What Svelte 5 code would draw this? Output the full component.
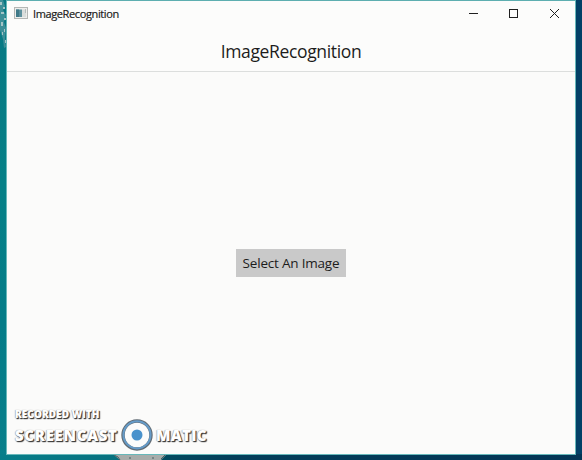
<script>
  const title = 'ImageRecognition';
</script>

<div class="desktop">
  <svg class="wallpaper" width="582" height="460" aria-hidden="true">
    <defs>
      <linearGradient id="teal" x1="0" y1="0" x2="0" y2="1">
        <stop offset="0" stop-color="#087883" />
        <stop offset="0.4" stop-color="#058087" />
        <stop offset="0.7" stop-color="#047c88" />
        <stop offset="1" stop-color="#087f8b" />
      </linearGradient>
      <linearGradient id="floor" x1="0" y1="0" x2="1" y2="0">
        <stop offset="0" stop-color="#077e8a" />
        <stop offset="0.2" stop-color="#07717f" />
        <stop offset="0.285" stop-color="#034b60" />
        <stop offset="0.4" stop-color="#033e5a" />
        <stop offset="1" stop-color="#033555" />
      </linearGradient>
    </defs>
    <rect width="582" height="460" fill="#024066" />
    <rect width="7" height="460" fill="url(#teal)" />
    <rect y="454" width="582" height="6" fill="url(#floor)" />
    <path d="M0 0H3L5 6L3 10L6 15L4 22L6 28L5 38L6 47L4 48L3 39L0 30Z" fill="#3d8f98" />
    <path d="M0 2h2v3H0zM3 7h2v2H3zM1 12h3v2H1zM4 18h2v2H4zM1 22h2v4H1zM4 29h1v3H4zM2 32h1v3H2zM5 40h1v3H5z" fill="#a5c5c7" />
    <path d="M114 455H166L161 460H120Z" fill="#a7acaa" />
    <path d="M114 455l4 2 2 3M129 458h2M152 458h2M165 455l-4 4" stroke="#465f62" fill="none" />
  </svg>

  <main class="window">
    <header class="titlebar">
      <svg class="appicon" width="14" height="12" viewBox="0 0 14 12" aria-hidden="true">
        <rect x=".5" y=".5" width="13" height="11" fill="#eeeeec" stroke="#b4b7b5" />
        <rect x="2" y="2.5" width="6" height="7.5" fill="#5d909d" />
        <path d="M2 2.5h3v7.5H2z" fill="#407a89" />
        <path d="M8 2.5h4v7.5H8z" fill="#d9dddb" />
        <path d="M11 3h1M11 5h1" stroke="#8a9999" />
      </svg>
      <span class="caption">{title}</span>
      <svg class="controls" width="100" height="26" viewBox="0 0 100 26" fill="none" stroke="#202020" aria-hidden="true">
        <path d="M4 13.5h9" />
        <rect x="44.5" y="9.5" width="8" height="8" />
        <path d="M85 9l9 9M94 9l-9 9" />
      </svg>
    </header>

    <h1>{title}</h1>

    <section>
      <button>Select An Image</button>
      <footer>
        <div class="recorded">RECORDED WITH</div>
        <div class="brand">
          <span class="screencast">SCREENCAST</span>
          <svg width="32" height="34" viewBox="0 0 32 34" aria-hidden="true">
            <circle cx="16" cy="18" r="14" fill="#fcfcfb" stroke="#616b73" stroke-width="3.4" />
            <circle cx="16" cy="17.8" r="13.6" fill="none" stroke="#659bc8" stroke-width="2" />
            <circle cx="16" cy="18" r="5.5" fill="#4992cc" />
          </svg>
          <span class="matic">MATIC</span>
        </div>
      </footer>
    </section>
  </main>
</div>

<style>
  :global(body) { overflow: hidden; }
  .desktop {
    box-sizing: border-box;
    width: 582px;
    height: 460px;
    padding: 0 6px 5px;
    font-family: "Open Sans", "Noto Sans", sans-serif;
    color: #1c1c1c;
  }
  .wallpaper { position: absolute; inset: 0; z-index: -1; }
  .window {
    box-sizing: border-box;
    display: flex;
    flex-direction: column;
    width: 570px;
    height: 455px;
    border: 1px solid #66b8ba;
    border-top-color: #5daeb0;
    background: #fcfcfb;
  }
  .titlebar { display: flex; height: 26px; flex: none; }
  .appicon { margin: 6px 5px 0 7px; }
  .caption { font-size: 11px; line-height: 26px; letter-spacing: -.38px; white-space: nowrap; -webkit-text-stroke: .2px #1c1c1c; }
  .controls { margin-left: auto; margin-right: 10px; margin-top: -1px; }
  h1 {
    box-sizing: border-box;
    flex: none;
    height: 45px;
    margin: 0;
    padding-top: 12px;
    border-bottom: 1px solid #dcdedd;
    font-size: 17.5px;
    font-weight: 400;
    line-height: 24px;
    letter-spacing: -.35px;
    text-align: center;
  }
  section { display: flex; flex: 1; flex-direction: column; background: #fbfbfa; }
  button {
    align-self: center;
    flex: none;
    width: 110px;
    height: 28px;
    margin: 177px 0 0;
    padding: 0 0 1px;
    border: 0;
    border-radius: 0;
    background: #c9c9c9;
    color: #1c1c1c;
    font-family: inherit;
    font-size: 13.5px;
    line-height: 26px;
    letter-spacing: -.2px;
    white-space: nowrap;
  }
  footer {
    margin-top: auto;
    padding-left: 8px;
    height: 48px;
    color: #fff;
    font-weight: 800;
    text-shadow: -.5px -.5px 1px #999, 1px 1px 1px #333, 1px 1px 1px #555;
    white-space: nowrap;
  }
  .recorded { height: 11px; font-size: 10px; line-height: 17px; letter-spacing: .05px; }
  .brand { display: flex; height: 34px; font-size: 15px; line-height: 36px; letter-spacing: .7px; }
  .screencast { width: 106px; }
  .brand svg { flex: none; }
  .matic { margin-left: 3px; letter-spacing: .3px; }
</style>
